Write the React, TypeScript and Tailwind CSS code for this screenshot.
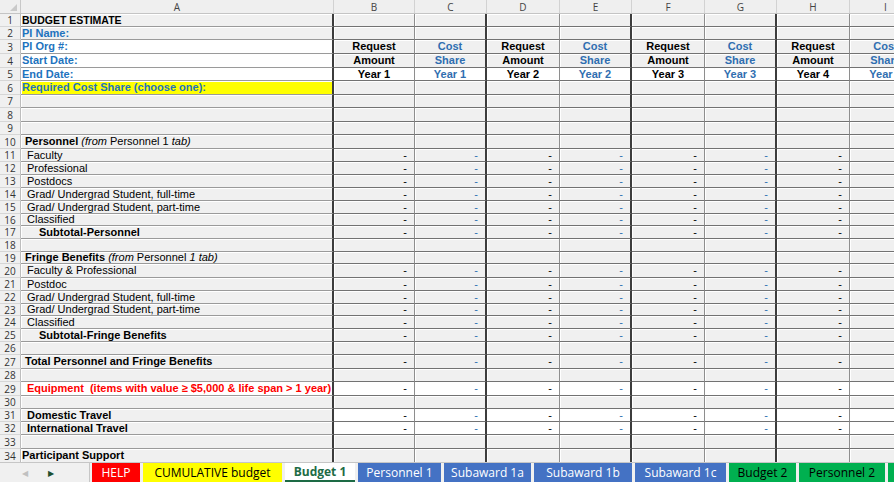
import React from 'react';

type Row = {
  n: number;
  h: string;
  a?: React.ReactNode;
  aCls?: string;
  aBg?: string;
  bg?: string;
  dash?: boolean;
  hdr?: 'req' | 'amt' | 'year';
};

const cols = ['A', 'B', 'C', 'D', 'E', 'F', 'G', 'H', 'I'];

const blueLabel = 'pl-px font-bold text-[#1e73be]';
const bold = 'font-bold text-black';

const rows: Row[] = [
  { n: 1, h: 'h-[13px]', a: 'BUDGET ESTIMATE', aCls: 'pl-px font-bold text-black text-[10.5px]' },
  { n: 2, h: 'h-[13px]', a: 'PI Name:', aCls: blueLabel },
  { n: 3, h: 'h-[14px]', a: 'PI Org #:', aCls: blueLabel, aBg: 'bg-white', hdr: 'req' },
  { n: 4, h: 'h-[14px]', a: 'Start Date:', aCls: blueLabel, aBg: 'bg-white', hdr: 'amt' },
  { n: 5, h: 'h-[13px]', a: 'End Date:', aCls: blueLabel, aBg: 'bg-white', bg: 'bg-white', hdr: 'year' },
  { n: 6, h: 'h-[14px]', a: 'Required Cost Share (choose one):', aCls: blueLabel, aBg: 'bg-[#ffff00]' },
  { n: 7, h: 'h-[13px]' },
  { n: 8, h: 'h-[14px]' },
  { n: 9, h: 'h-[13px]' },
  {
    n: 10,
    h: 'h-[14px]',
    a: (
      <>
        <span className="font-bold">Personnel</span> <i>(from</i> Personnel 1 <i>tab)</i>
      </>
    ),
    aCls: 'pl-1 text-black',
  },
  { n: 11, h: 'h-[13px]', a: 'Faculty', aCls: 'pl-[6px] text-black', dash: true },
  { n: 12, h: 'h-[13px]', a: 'Professional', aCls: 'pl-[6px] text-black', dash: true },
  { n: 13, h: 'h-[13px]', a: 'Postdocs', aCls: 'pl-[6px] text-black', dash: true },
  { n: 14, h: 'h-[13px]', a: 'Grad/ Undergrad Student, full-time', aCls: 'pl-[6px] text-black', dash: true },
  { n: 15, h: 'h-[13px]', a: 'Grad/ Undergrad Student, part-time', aCls: 'pl-[6px] text-black', dash: true },
  { n: 16, h: 'h-[12px]', a: 'Classified', aCls: 'pl-[6px] text-black', dash: true },
  { n: 17, h: 'h-[13px]', a: 'Subtotal-Personnel', aCls: 'pl-[18px] ' + bold, dash: true },
  { n: 18, h: 'h-[13px]' },
  {
    n: 19,
    h: 'h-[12px]',
    a: (
      <>
        <span className="font-bold">Fringe Benefits</span> <i>(from</i> Personnel <i>1 tab)</i>
      </>
    ),
    aCls: 'pl-1 text-black',
  },
  { n: 20, h: 'h-[14px]', a: 'Faculty & Professional', aCls: 'pl-[6px] text-black', dash: true },
  { n: 21, h: 'h-[13px]', a: 'Postdoc', aCls: 'pl-[6px] text-black', dash: true },
  { n: 22, h: 'h-[13px]', a: 'Grad/ Undergrad Student, full-time', aCls: 'pl-[6px] text-black', dash: true },
  { n: 23, h: 'h-[12px]', a: 'Grad/ Undergrad Student, part-time', aCls: 'pl-[6px] text-black', dash: true },
  { n: 24, h: 'h-[13px]', a: 'Classified', aCls: 'pl-[6px] text-black', dash: true },
  { n: 25, h: 'h-[13px]', a: 'Subtotal-Fringe Benefits', aCls: 'pl-[18px] ' + bold, dash: true },
  { n: 26, h: 'h-[13px]' },
  { n: 27, h: 'h-[14px]', a: 'Total Personnel and Fringe Benefits', aCls: 'pl-1 ' + bold, dash: true },
  { n: 28, h: 'h-[13px]' },
  {
    n: 29,
    h: 'h-[14px]',
    a: 'Equipment  (items with value \u2265 $5,000 & life span > 1 year)',
    aCls: 'pl-[6px] font-bold text-[#ff0000] whitespace-pre',
    aBg: 'bg-white',
    bg: 'bg-white',
    dash: true,
  },
  { n: 30, h: 'h-[13px]' },
  { n: 31, h: 'h-[13px]', a: 'Domestic Travel', aCls: 'pl-[6px] ' + bold, bg: 'bg-white', dash: true },
  { n: 32, h: 'h-[13px]', a: 'International Travel', aCls: 'pl-[6px] ' + bold, bg: 'bg-white', dash: true },
  { n: 33, h: 'h-[14px]' },
  { n: 34, h: 'h-[14px]', a: 'Participant Support', aCls: 'pl-px ' + bold },
];

const hdrText = (kind: Row['hdr'], idx: number) => {
  const isReq = idx % 2 === 1;
  const year = Math.ceil(idx / 2);
  if (kind === 'req') return isReq ? 'Request' : 'Cost';
  if (kind === 'amt') return isReq ? 'Amount' : 'Share';
  return `Year ${year}`;
};

const tabs = [
  { label: 'HELP', w: 'w-[48px]', cls: 'bg-[#ff0000] text-white' },
  { label: 'CUMULATIVE budget', w: 'w-[139px]', cls: 'bg-[#ffff00] text-black' },
  { label: 'Budget 1', w: 'w-[70px]', cls: 'bg-white text-[#1d6b45] font-bold border-b-2 border-b-[#1d6b45]' },
  { label: 'Personnel 1', w: 'w-[83px]', cls: 'bg-[#4472c4] text-white' },
  { label: 'Subaward 1a', w: 'w-[87px]', cls: 'bg-[#4472c4] text-white' },
  { label: 'Subaward 1b', w: 'w-[98px]', cls: 'bg-[#4472c4] text-white' },
  { label: 'Subaward 1c', w: 'w-[91px]', cls: 'bg-[#4472c4] text-white' },
  { label: 'Budget 2', w: 'w-[67px]', cls: 'bg-[#00b050] text-black' },
  { label: 'Personnel 2', w: 'w-[86px]', cls: 'bg-[#00b050] text-black' },
  { label: 'Subaward 2a', w: 'w-[87px]', cls: 'bg-[#00b050] text-black' },
];

const grid =
  'grid grid-cols-[21px_313px_81px_72px_73px_72px_73px_72px_73px_72px] w-[922px]';

function rightBorder(i: number) {
  // thick lines after A, C, E, G
  return i % 2 === 0 && i < 8
    ? 'border-r-2 border-r-[#3c3c3c]'
    : 'border-r border-r-[#8e8e8e]';
}

export default function App() {
  return (
    <div className="w-[894px] h-[482px] overflow-hidden bg-[#f0f0f0] flex flex-col font-['Liberation_Sans',Arial,sans-serif] text-[11px] leading-none">
      <div className="h-[462px] shrink-0 overflow-hidden">
        {/* column letters */}
        <div className={grid + ' h-[14px] bg-[#efefef] border-b border-b-[#c4c4c4]'}>
          <div className="relative border-r border-r-[#c8c8c8]">
            <div className="absolute right-[3px] bottom-[2px] w-0 h-0 border-l-[7px] border-l-transparent border-b-[7px] border-b-[#c9c9c9]" />
          </div>
          {cols.map((c) => (
            <div
              key={c}
              className="flex items-center justify-center border-r border-r-[#d2d2d2] text-[10px] text-[#444] font-['Open_Sans',sans-serif]"
            >
              {c}
            </div>
          ))}
        </div>

        {rows.map((r) => (
          <div key={r.n} className={grid + ' ' + r.h}>
            <div className="flex items-center justify-center border-r border-r-[#bdbdbd] border-b border-b-[#d6d6d6] text-[10px] text-[#333] font-['Open_Sans',sans-serif]">
              {r.n}
            </div>
            <div
              className={
                'flex items-center overflow-visible whitespace-nowrap border-b border-b-[#9a9a9a] shadow-[inset_1px_1px_0_#ffffff] ' +
                rightBorder(0) +
                ' ' +
                (r.aBg ?? 'bg-[#f0f0f0]') +
                ' ' +
                (r.aCls ?? '')
              }
            >
              <span>{r.a}</span>
            </div>
            {[1, 2, 3, 4, 5, 6, 7, 8].map((i) => {
              const isReq = i % 2 === 1;
              return (
                <div
                  key={i}
                  className={
                    'flex items-center border-b border-b-[#727272] shadow-[inset_1px_1px_0_#ffffff] ' +
                    rightBorder(i) +
                    ' ' +
                    (r.bg ?? 'bg-[#f0f0f0]') +
                    ' ' +
                    (r.hdr ? 'justify-center font-bold ' : 'justify-end pr-[7px] ') +
                    (isReq ? 'text-black' : 'text-[#2f6eb0]')
                  }
                >
                  {r.hdr ? hdrText(r.hdr, i) : r.dash && i < 8 ? '-' : ''}
                </div>
              );
            })}
          </div>
        ))}
      </div>

      {/* sheet tabs */}
      <div className="h-[20px] flex items-stretch bg-[#f0f0f0] border-t border-t-[#c6c6c6] font-['Open_Sans',sans-serif] text-[12px]">
        <div className="w-[89px] shrink-0 flex items-center gap-[20px] pl-[22px] text-[8px]">
          <span className="text-[#c0c0c0]">◀</span>
          <span className="text-[#1d4f2f]">▶</span>
        </div>
        <div className="flex gap-[3px] pl-[2px] border-l border-l-[#c6c6c6]">
          {tabs.map((t) => (
            <div
              key={t.label}
              className={'flex items-center justify-center shrink-0 whitespace-nowrap ' + t.w + ' ' + t.cls}
            >
              {t.label}
            </div>
          ))}
        </div>
      </div>
    </div>
  );
}
